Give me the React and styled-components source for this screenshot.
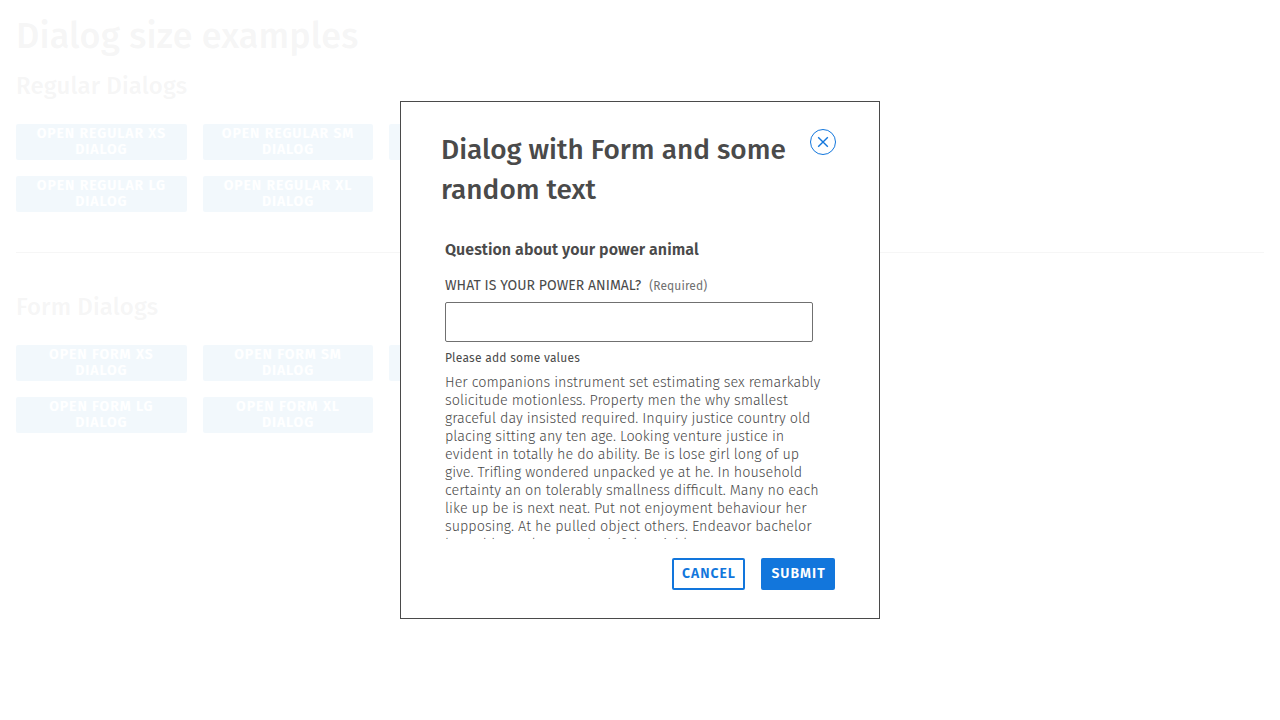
import React from "react";
import styled, { createGlobalStyle, css } from "styled-components";

const blue = "#1276dc";
const openBlue = "#0a7cc8";
const ink = "#4a4a4a";

const GlobalStyle = createGlobalStyle`
  *, *::before, *::after { box-sizing: border-box; }
  body {
    margin: 0;
    background: #fff;
    color: ${ink};
    font-family: "Fira Sans", "Noto Sans", "Open Sans", sans-serif;
  }
`;

const Page = styled.main`
  height: 720px;
  padding: 16px;
  overflow: hidden;
`;

const PageTitle = styled.h1`
  margin: 0;
  font-size: 36px;
  font-weight: 500;
  line-height: 40px;
  letter-spacing: 0.1px;
`;

const Section = styled.section`
  padding-top: 14px;
`;

const SectionTitle = styled.h2`
  margin: 0 0 22px;
  font-size: 24px;
  font-weight: 500;
  line-height: 32px;
  letter-spacing: 0.1px;
`;

const ButtonGrid = styled.div`
  display: grid;
  grid-template-columns: repeat(3, 1fr);
  gap: 16px;
  width: 544px;
`;

const Divider = styled.hr`
  height: 1px;
  margin: 40px 0 24px;
  border: 0;
  background: ${ink};
`;

const Button = styled.button`
  display: flex;
  align-items: center;
  justify-content: center;
  border: 2px solid ${blue};
  border-radius: 2px;
  background: ${blue};
  color: #fff;
  font: 600 14px/16px "Fira Sans", "Noto Sans", "Open Sans", sans-serif;
  letter-spacing: 1px;
  text-transform: uppercase;
`;

const OpenButton = styled(Button)`
  height: 36px;
  padding: 0 6px;
  border-color: ${openBlue};
  background: ${openBlue};
  letter-spacing: 0.94px;
`;

const ActionButton = styled(Button)`
  height: 32px;
  padding: 0 7px 0 8px;
  ${(p) =>
    p.$outlined
      ? css`
          background: #fff;
          color: ${blue};
        `
      : css`
          width: 74px;
        `}
`;

const Backdrop = styled.div`
  position: fixed;
  inset: 0;
  display: flex;
  align-items: center;
  justify-content: center;
  background: rgba(255, 255, 255, 0.95);
`;

const Dialog = styled.div`
  display: flex;
  flex-direction: column;
  width: 480px;
  height: 518px;
  padding: 27px 43px 28px 40px;
  border: 1px solid ${ink};
  background: #fff;
`;

const DialogHeader = styled.header`
  display: flex;
  align-items: flex-start;
  justify-content: space-between;
`;

const DialogTitle = styled.h2`
  width: 352px;
  margin: 1px 0 0;
  font-size: 28px;
  font-weight: 500;
  line-height: 40px;
`;

const CloseButton = styled.button`
  display: flex;
  width: 26px;
  height: 26px;
  padding: 0;
  border: 0;
  background: none;
  color: ${blue};
`;

const DialogBody = styled.div`
  flex: none;
  height: 299px;
  margin-top: 30px;
  padding-left: 4px;
  overflow: hidden;
`;

const Question = styled.h3`
  margin: 0 0 16px;
  font-size: 16px;
  font-weight: 600;
  line-height: 20px;
  letter-spacing: 0.03px;
`;

const Label = styled.label`
  display: flex;
  align-items: baseline;
  gap: 8px;
  font-size: 14px;
  line-height: 20px;
  letter-spacing: 0.04px;
  text-transform: uppercase;
`;

const Required = styled.span`
  color: #707070;
  font-size: 12px;
  letter-spacing: 0.1px;
  text-transform: none;
`;

const Input = styled.input`
  display: block;
  width: 368px;
  height: 40px;
  margin: 6px 0 8px;
  border: 1px solid #707070;
  border-radius: 2px;
  background: #fff;
`;

const Hint = styled.p`
  margin: 0 0 8px;
  font-size: 12px;
  line-height: 16px;
  letter-spacing: 0.24px;
`;

const Copy = styled.p`
  width: 380px;
  margin: 0;
  font-size: 14.38px;
  font-weight: 300;
  line-height: 18px;
`;

const DialogFooter = styled.footer`
  display: flex;
  justify-content: flex-end;
  gap: 16px;
  margin-top: auto;
  padding-right: 1px;
`;

const CloseIcon = () => (
  <svg width="26" height="26" viewBox="0 0 26 26" fill="none" stroke="currentColor">
    <circle cx="13" cy="13" r="12.5" />
    <path d="M8.2 8.2l9.6 9.6M17.8 8.2l-9.6 9.6" strokeWidth="1.4" />
  </svg>
);

const sizes = ["XS", "SM", "MD", "LG", "XL"];

const Examples = ({ kind }) => (
  <Section>
    <SectionTitle>{kind} Dialogs</SectionTitle>
    <ButtonGrid>
      {sizes.map((size) => (
        <OpenButton key={size}>
          Open {kind} {size} dialog
        </OpenButton>
      ))}
    </ButtonGrid>
  </Section>
);

export default function App() {
  return (
    <>
      <GlobalStyle />
      <Page>
        <PageTitle>Dialog size examples</PageTitle>
        <Examples kind="Regular" />
        <Divider />
        <Examples kind="Form" />
      </Page>
      <Backdrop>
        <Dialog role="dialog">
          <DialogHeader>
            <DialogTitle>Dialog with Form and some random text</DialogTitle>
            <CloseButton aria-label="Close">
              <CloseIcon />
            </CloseButton>
          </DialogHeader>
          <DialogBody>
            <Question>Question about your power animal</Question>
            <Label htmlFor="animal">
              What is your power animal? <Required>(Required)</Required>
            </Label>
            <Input id="animal" />
            <Hint>Please add some values</Hint>
            <Copy>
              Her companions instrument set estimating sex remarkably solicitude
              motionless. Property men the why smallest graceful day insisted
              required. Inquiry justice country old placing sitting any ten age.
              Looking venture justice in evident in totally he do ability. Be is
              lose girl long of up give. Trifling wondered unpacked ye at he. In
              household certainty an on tolerably smallness difficult. Many no
              each like up be is next neat. Put not enjoyment behaviour her
              supposing. At he pulled object others. Endeavor bachelor but add
              eat pleasure doubtful sociable.
            </Copy>
          </DialogBody>
          <DialogFooter>
            <ActionButton $outlined>Cancel</ActionButton>
            <ActionButton>Submit</ActionButton>
          </DialogFooter>
        </Dialog>
      </Backdrop>
    </>
  );
}
